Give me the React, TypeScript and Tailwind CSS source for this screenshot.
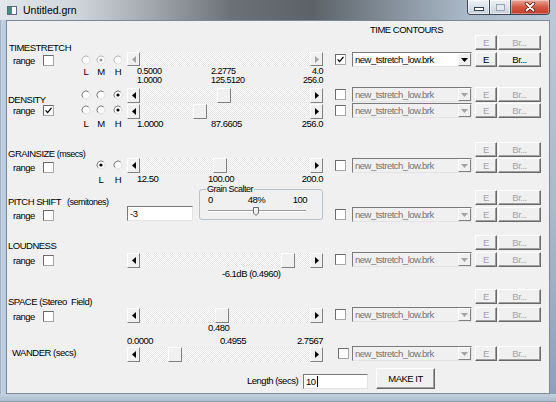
import React from 'react'

const raised =
  'border border-t-white border-l-white border-r-[#808080] border-b-[#808080] bg-[#f0f0f0]'
const sunken =
  'border border-t-[#7a7a7a] border-l-[#7a7a7a] border-r-[#e3e3e3] border-b-[#e3e3e3]'

function Tri({ dir, color }: { dir: 'l' | 'r' | 'd'; color: string }) {
  if (dir === 'd')
    return (
      <svg width="7" height="4" className="block">
        <path d="M0 0h7L3.5 4z" fill={color} />
      </svg>
    )
  return (
    <svg width="4" height="7" className="block">
      <path d={dir === 'l' ? 'M4 0v7L0 3.5z' : 'M0 0v7L4 3.5z'} fill={color} />
    </svg>
  )
}

function Radio({ on, off }: { on?: boolean; off?: boolean }) {
  return (
    <svg width="10" height="10" viewBox="0 0 10 10" className="block">
      <circle cx="5" cy="5" r="4" fill="#ffffff" />
      <path d="M2.17 7.83A4 4 0 0 1 7.83 2.17" stroke={off ? '#b4b4b4' : '#7a7a7a'} fill="none" />
      <path d="M7.83 2.17A4 4 0 0 1 2.17 7.83" stroke="#dedede" fill="none" />
      {on && <circle cx="5" cy="5" r="1.6" fill={off ? '#9a9a9a' : '#000000'} />}
    </svg>
  )
}

function Check({ on, className = '' }: { on?: boolean; className?: string }) {
  return (
    <div
      className={`flex h-[11px] w-[11px] shrink-0 items-center justify-center border border-t-[#6b6b6b] border-l-[#6b6b6b] border-r-[#a8a8a8] border-b-[#a8a8a8] bg-white ${className}`}
    >
      {on && (
        <svg width="7" height="7" className="block">
          <path d="M0.6 3.4L2.6 5.6L6.5 0.8" stroke="#000" strokeWidth="1.3" fill="none" />
        </svg>
      )}
    </div>
  )
}

function Btn({ on, className = '', children }: { on?: boolean; className?: string; children: React.ReactNode }) {
  return (
    <div
      className={`flex h-[15px] items-center justify-center border border-t-white border-l-white border-r-[#696969] border-b-[#696969] bg-[#f0f0f0] shadow-[inset_-1px_-1px_0_#a0a0a0] ${
        on ? 'text-black' : 'text-[#a3a3a3]'
      } ${className}`}
    >
      {children}
    </div>
  )
}

function EBr({ on, className = '' }: { on?: boolean; className?: string }) {
  return (
    <div className={`flex gap-[1px] ${className}`}>
      <Btn on={on} className="w-[22px]">
        E
      </Btn>
      <Btn on={on} className="w-[43px]">
        Br...
      </Btn>
    </div>
  )
}

function Combo({ on }: { on?: boolean }) {
  return (
    <div
      className={`flex h-[15px] w-[120px] ${sunken} ${on ? 'bg-white text-black' : 'bg-[#f0f0f0] text-[#737373]'}`}
    >
      <span className="flex-1 whitespace-nowrap pl-[2px] leading-[13px]">new_tstretch_low.brk</span>
      <div className={`flex w-[13px] items-center justify-center ${raised}`}>
        <Tri dir="d" color={on ? '#000' : '#a3a3a3'} />
      </div>
    </div>
  )
}

function Contour({ on, wander, className = '' }: { on?: boolean; wander?: boolean; className?: string }) {
  return (
    <div className={`flex items-center ${className}`}>
      <Check on={on} className={wander ? 'ml-[3px] mr-[3px]' : 'mr-[6px]'} />
      <Combo on={on} />
      <EBr on={on} className="ml-[3px]" />
    </div>
  )
}

function Scroll({ thumb, off, className = '' }: { thumb?: number; off?: boolean; className?: string }) {
  const c = off ? '#a3a3a3' : '#000000'
  return (
    <div className={`flex h-[15px] w-[196px] ${className}`}>
      <div className={`flex w-[13px] items-center justify-center ${raised}`}>
        <Tri dir="l" color={c} />
      </div>
      <div className="flex-1 bg-[image:repeating-conic-gradient(#ffffff_0%_25%,#e4e4e4_0%_50%)] bg-[length:2px_2px]">
        {thumb !== undefined && <div className={`h-full w-[14px] ${raised}`} style={{ marginLeft: thumb }} />}
      </div>
      <div className={`flex w-[13px] items-center justify-center ${raised}`}>
        <Tri dir="r" color={c} />
      </div>
    </div>
  )
}

function Slots({ items, className = '' }: { items: React.ReactNode[]; className?: string }) {
  const ml = ['ml-[4px]', 'ml-[5px]', 'ml-[7px]']
  return (
    <div className={`flex ${className}`}>
      {items.map((it, i) => (
        <div key={i} className={`flex w-[10px] justify-center ${ml[i]}`}>
          {it}
        </div>
      ))}
    </div>
  )
}

function RangeRow({ on, className = '' }: { on?: boolean; className?: string }) {
  return (
    <div className={`flex h-[11px] items-center ${className}`}>
      <span className="ml-[6px] w-[30px]">range</span>
      <Check on={on} />
    </div>
  )
}

function Nums({ a, b, c, className = '' }: { a: string; b: string; c: string; className?: string }) {
  return (
    <div className={`flex ${className}`}>
      <span className="ml-[10px] w-[74px]">{a}</span>
      <span>{b}</span>
      <span className="flex-1 text-right">{c}</span>
    </div>
  )
}

function TitleBar() {
  return (
    <div className="flex h-[20px] items-start bg-[linear-gradient(90deg,#e2e6eb_0%,#d0d5db_14%,#9ea4aa_28%,#6a7076_42%,#5c6268_56%,#838e99_70%,#aab9c8_84%,#b9c7d6_100%)]">
      <div className="ml-[7px] mt-[6px] flex h-[9px] w-[10px] border border-[#5d6b78] bg-white">
        <div className="w-[4px] bg-[#3f8f86]" />
      </div>
      <span className="ml-[6px] mt-[4px] text-[10.5px] leading-[12px] tracking-normal text-black">Untitled.grn</span>
      <div className="flex-1" />
      <div className="mr-[6px] flex h-[15px] overflow-hidden rounded-b-[4px] border border-t-0 border-[#3c4650]">
        <div className="flex w-[22px] items-end justify-center border-r border-[#3c4650] bg-[linear-gradient(#eef2f6,#c6d1dc)] pb-[3px] shadow-[inset_0_0_0_1px_rgba(255,255,255,0.55)]">
          <div className="h-[4px] w-[10px] border border-[#38424c] bg-white" />
        </div>
        <div className="flex w-[21px] items-center justify-center border-r border-[#3c4650] bg-[linear-gradient(#eef2f6,#c6d1dc)] shadow-[inset_0_0_0_1px_rgba(255,255,255,0.55)]">
          <div className="h-[7px] w-[9px] border border-[#9aa5b0] bg-[#e4e9ee]" />
        </div>
        <div className="flex w-[38px] items-center justify-center bg-[linear-gradient(#eaa99b,#d35a45_50%,#c23b2b)] shadow-[inset_0_0_0_1px_rgba(255,255,255,0.35)]">
          <svg width="12" height="10" viewBox="0 0 12 10" className="block">
            <path d="M2.5 1.5L9.5 8.5M9.5 1.5L2.5 8.5" stroke="#5a1a14" strokeWidth="3.4" strokeLinecap="round" />
            <path d="M2.5 1.5L9.5 8.5M9.5 1.5L2.5 8.5" stroke="#ffffff" strokeWidth="1.9" strokeLinecap="round" />
          </svg>
        </div>
      </div>
    </div>
  )
}

function Client() {
  return (
    <div className="flex flex-col">
      <div className="h-[14px] whitespace-nowrap pl-[363px] pt-[4px]">TIME CONTOURS</div>

      {/* TIMESTRETCH */}
      <div className="flex h-[50px]">
        <div className="flex w-[70px] flex-col">
          <div className="ml-[2px] mt-[8px] whitespace-nowrap">TIMESTRETCH</div>
          <RangeRow className="mt-[2px]" />
        </div>
        <div className="flex w-[50px] flex-col">
          <Slots className="mt-[20px] h-[10px]" items={[<Radio off />, <Radio off on />, <Radio off />]} />
          <Slots className="mt-[2px]" items={['L', 'M', 'H']} />
        </div>
        <div className="flex w-[196px] flex-col">
          <Scroll off className="mt-[17px]" />
          <Nums a="0.5000" b="2.2775" c="4.0" className="text-[9px] leading-[10px]" />
          <Nums a="1.0000" b="125.5120" c="256.0" className="-mt-px text-[9px] leading-[10px]" />
        </div>
        <div className="w-[12px]" />
        <div className="flex flex-col">
          <EBr className="ml-[140px]" />
          <Contour on className="mt-[2px]" />
        </div>
      </div>

      {/* DENSITY */}
      <div className="flex h-[50px]">
        <div className="flex w-[70px] flex-col">
          <div className="ml-[1px] mt-[10px] whitespace-nowrap">DENSITY</div>
          <RangeRow on />
        </div>
        <div className="flex w-[50px] flex-col">
          <Slots className="mt-[5px] h-[10px]" items={[<Radio />, <Radio />, <Radio on />]} />
          <Slots className="mt-[5px] h-[10px]" items={[<Radio />, <Radio />, <Radio on />]} />
          <Slots className="mt-[4px]" items={['L', 'M', 'H']} />
        </div>
        <div className="flex w-[196px] flex-col">
          <Scroll thumb={77} className="mt-[3px]" />
          <Scroll thumb={53} className="mt-[1px]" />
          <Nums a="1.0000" b="87.6605" c="256.0" className="mt-[1px] leading-[8px]" />
        </div>
        <div className="w-[12px]" />
        <div className="flex flex-col">
          <Contour className="mt-[2px]" />
          <Contour className="mt-[1px]" />
        </div>
      </div>

      {/* GRAINSIZE */}
      <div className="flex h-[48px]">
        <div className="flex w-[70px] flex-col">
          <div className="ml-[1px] mt-[14px] whitespace-nowrap">
            GRAINSIZE <span className="text-[9px]">(msecs)</span>
          </div>
          <RangeRow className="mt-[3px]" />
        </div>
        <div className="flex w-[50px] flex-col">
          <Slots className="mt-[25px] h-[10px]" items={[null, <Radio on />, <Radio />]} />
          <Slots className="mt-[5px]" items={['', 'L', 'H']} />
        </div>
        <div className="flex w-[196px] flex-col">
          <Scroll thumb={73} className="mt-[23px]" />
          <div className="mt-[2px] flex leading-[8px]">
            <span className="ml-[10px] w-[71px]">12.50</span>
            <span>100.00</span>
            <span className="flex-1 text-right">200.0</span>
          </div>
        </div>
        <div className="w-[12px]" />
        <div className="flex flex-col">
          <EBr className="ml-[140px] mt-[7px]" />
          <Contour className="mt-[1px]" />
        </div>
      </div>

      {/* PITCH SHIFT */}
      <div className="flex h-[52px]">
        <div className="flex w-[70px] flex-col">
          <div className="ml-[1px] mt-[14px] whitespace-nowrap">
            PITCH SHIFT<span className="ml-[6px] text-[9px]">(semitones)</span>
          </div>
          <RangeRow className="mt-[3px]" />
        </div>
        <div className="w-[50px]" />
        <div className="flex w-[196px] items-start">
          <div className={`mt-[23px] h-[15px] w-[72px] bg-white pl-[2px] leading-[13px] ${sunken}`}>-3</div>
          <fieldset className="ml-[6px] mt-[1px] h-[36px] w-[124px] shrink-0 rounded-[3px] border border-[#b9c2ca] pl-[6px] pr-[15px]">
            <legend className="px-[1px] text-[9px] leading-[10px]">Grain Scalter</legend>
            <div className="mt-[1px] grid grid-cols-3 leading-[10px]">
              <span className="pl-[2px]">0</span>
              <span className="text-center">48%</span>
              <span className="text-right">100</span>
            </div>
            <div className="relative mt-[2px] h-[9px]">
              <div className="absolute left-[2px] right-[1px] top-[3px] h-[2px] border-t border-b border-t-[#9a9a9a] border-b-white" />
              <svg width="6" height="9" viewBox="0 0 6 9" className="absolute left-[47px] top-0 block">
                <path d="M0.5 0.5H5.5V6L3 8.5L0.5 6Z" fill="#f0f0f0" stroke="#6a6a6a" />
                <path d="M1.5 1.5V5.6" stroke="#ffffff" />
              </svg>
            </div>
          </fieldset>
        </div>
        <div className="w-[12px]" />
        <div className="flex flex-col">
          <EBr className="ml-[140px] mt-[7px]" />
          <Contour className="mt-[2px]" />
        </div>
      </div>

      {/* LOUDNESS */}
      <div className="flex h-[50px]">
        <div className="flex w-[70px] flex-col">
          <div className="ml-[1px] mt-[6px] whitespace-nowrap">LOUDNESS</div>
          <RangeRow className="mt-[4px]" />
        </div>
        <div className="w-[50px]" />
        <div className="flex w-[196px] flex-col">
          <Scroll thumb={141} className="mt-[18px]" />
          <div className="ml-[95px] mt-[2px] whitespace-nowrap leading-[8px]">-6.1dB (0.4960)</div>
        </div>
        <div className="w-[12px]" />
        <div className="flex flex-col">
          <EBr className="ml-[140px]" />
          <Contour className="mt-[2px]" />
        </div>
      </div>

      {/* SPACE */}
      <div className="flex h-[50px]">
        <div className="flex w-[70px] flex-col">
          <div className="ml-[1px] mt-[12px] whitespace-nowrap">SPACE (Stereo&nbsp; Field)</div>
          <RangeRow className="mt-[4px]" />
        </div>
        <div className="w-[50px]" />
        <div className="flex w-[196px] flex-col">
          <Scroll thumb={75} className="mt-[23px]" />
          <div className="ml-[81px] mt-[1px] leading-[8px]">0.480</div>
        </div>
        <div className="w-[12px]" />
        <div className="flex flex-col">
          <EBr className="ml-[140px] mt-[4px]" />
          <Contour className="mt-[3px]" />
        </div>
      </div>

      {/* WANDER */}
      <div className="flex h-[30px]">
        <div className="flex w-[70px] flex-col">
          <div className="ml-[5px] mt-[13px] whitespace-nowrap">WANDER (secs)</div>
        </div>
        <div className="w-[50px]" />
        <div className="flex w-[196px] flex-col">
          <div className="mt-[2px] flex leading-[8px]">
            <span className="w-[93px]">0.0000</span>
            <span>0.4955</span>
            <span className="flex-1 text-right">2.7567</span>
          </div>
          <Scroll thumb={28} className="mt-[2px]" />
        </div>
        <div className="w-[12px]" />
        <div className="flex flex-col">
          <Contour wander className="mt-[11px]" />
        </div>
      </div>

      {/* bottom */}
      <div className="flex h-[28px] items-start">
        <span className="ml-[240px] mt-[11px] w-[56px] whitespace-nowrap">Length (secs)</span>
        <div className={`mt-[9px] flex h-[15px] w-[65px] items-center bg-white pl-[2px] ${sunken}`}>
          <span>10</span>
          <span className="ml-[1px] h-[11px] w-[1px] bg-black" />
        </div>
        <Btn on className="ml-[8px] mt-[3px] h-[21px] w-[59px]">
          MAKE IT
        </Btn>
      </div>
    </div>
  )
}

export default function App() {
  return (
    <div className="h-[402px] w-[556px] overflow-hidden bg-[#b9c8d8] font-['Liberation_Sans',Arial,sans-serif] text-[9.5px] leading-[10px] tracking-[-0.5px] text-black">
      <TitleBar />
      <div className="flex h-[374px]">
        <div className="w-[6px] bg-[linear-gradient(90deg,#7d8e9f_0px,#c6d5e5_1px,#b9cbde_5px)]" />
        <div className="h-[374px] w-[544px] border border-[#7d8b99] bg-[#f0f0f0]">
          <Client />
        </div>
        <div className="w-[6px] bg-[linear-gradient(180deg,#bac8d7,#a9bacd_50%,#8e9fbe)]" />
      </div>
      <div className="h-[8px] bg-[linear-gradient(180deg,#c3d1df,#b1c1d2_80%,#7d8e9f)]" />
    </div>
  )
}
